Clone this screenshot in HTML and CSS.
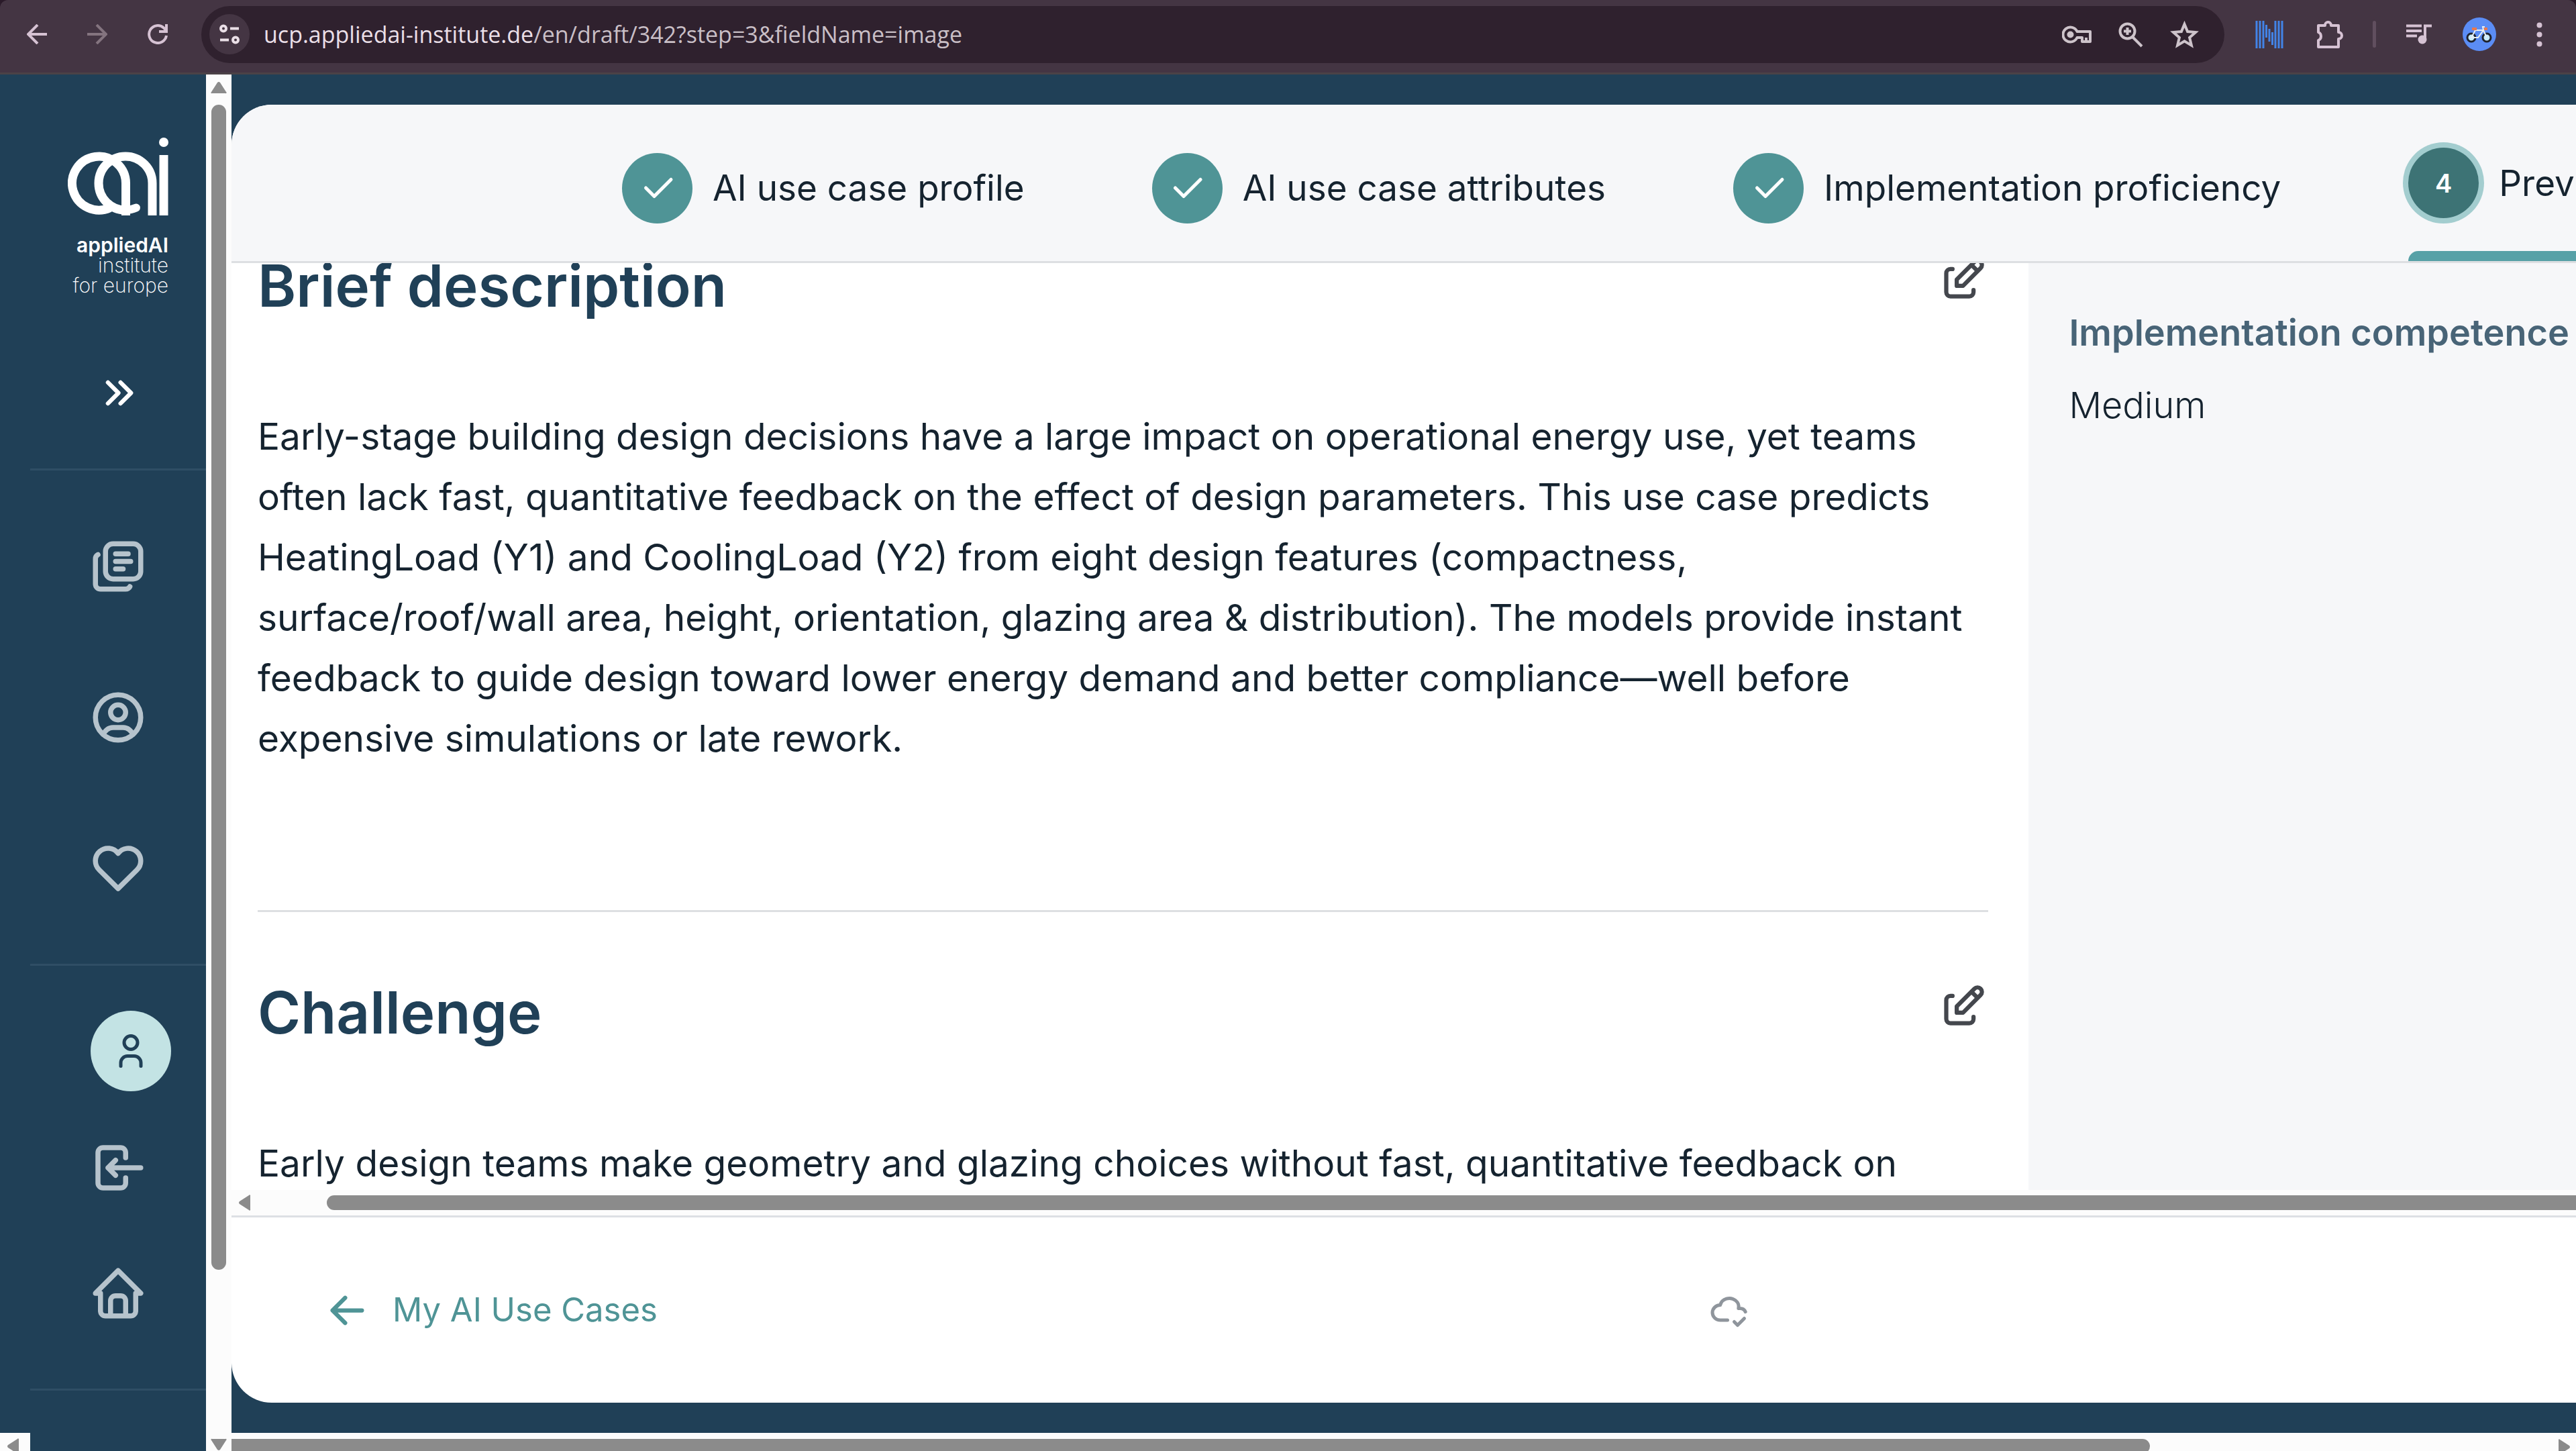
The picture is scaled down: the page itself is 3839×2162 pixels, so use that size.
FILE: index.html
```html
<!DOCTYPE html>
<html lang="en">
<head>
<meta charset="utf-8">
<title>AI use case draft</title>
<link rel="stylesheet" href="styles.css">
</head>
<body>
<div class="toolbar-wrap">
<header class="toolbar">
  <button class="tool tool-nav" aria-label="Back"><svg class="ic30" viewBox="0 0 30 30"><path d="M30 15H3M16 1L2 15l14 14" fill="none" stroke="currentColor" stroke-width="4"/></svg></button>
  <button class="tool tool-nav tool-off" aria-label="Forward"><svg class="ic30" viewBox="0 0 30 30"><path d="M0 15h27M14 1l14 14-14 14" fill="none" stroke="currentColor" stroke-width="4"/></svg></button>
  <button class="tool tool-nav" aria-label="Reload"><svg class="ic30" viewBox="0 0 30 30"><path d="M28 17A13 13 0 1 1 24 5.500l3 3M28 0v11H17" fill="none" stroke="currentColor" stroke-width="4"/></svg></button>
  <div class="omnibox">
    <button class="site-info" aria-label="Site information"><svg class="ic30" viewBox="0 0 30 30"><g fill="none" stroke="currentColor" stroke-width="4"><circle cx="6" cy="6.500" r="4"/><path d="M16 6.500h13M1 23.500h13"/><circle cx="24" cy="23.500" r="4"/></g></svg></button>
    <div class="url">ucp.appliedai-institute.de<span class="url-path">/en/draft/342?step=3&amp;fieldName=image</span></div>
    <button class="tool tool-grey" aria-label="Passwords"><svg class="ic45" viewBox="0 0 45 45"><g fill="none" stroke="currentColor" stroke-width="4" stroke-linejoin="round"><path d="M22.500 18A11 11 0 1 0 22.500 27H30v6h12V18z"/><path d="M36 33v-6"/></g><circle cx="12.500" cy="22.500" r="5" fill="currentColor"/></svg></button>
    <button class="tool tool-grey" aria-label="Zoom"><svg class="ic45" viewBox="0 0 45 45"><g fill="none" stroke="currentColor" stroke-width="4"><circle cx="17.500" cy="17.500" r="11"/><path d="M25 26l14 14M17.500 12v11M12 17.500h11"/></g></svg></button>
    <button class="tool tool-grey" aria-label="Bookmark"><svg class="ic45" viewBox="0 0 45 45"><path d="M22.500 7l4.600 11 12 1-9 8 2.800 11.600-10.400-6.200-10.400 6.200L14.900 27l-9-8 12-1z" fill="none" stroke="currentColor" stroke-width="4"/></svg></button>
  </div>
  <div class="extensions">
    <button class="tool tool-blue" aria-label="Extension"><svg class="ic45" viewBox="0 0 45 45"><path d="M4 2v41M9 2v41M14 2v41M18.500 8v19M23 14v19M27.500 19v19M32 2v41M37 2v41M42 2v41" stroke="currentColor" stroke-width="3"/></svg></button>
    <button class="tool" aria-label="Extensions"><svg class="ic45" viewBox="0 0 45 45"><path d="M5 9h10a4.500 4.500 0 0 1 9-1v1h11v10a4.500 4.500 0 0 1 0 10v12H5V31a6.500 6.500 0 0 0 0-12z" transform="translate(1 0)" fill="none" stroke="currentColor" stroke-width="4" stroke-linejoin="round"/></svg></button>
    <span class="divider"></span>
    <button class="tool" aria-label="Media"><svg class="ic45" viewBox="0 0 45 45"><path d="M3 9.500h23M3 17h23M3 24.500h16" stroke="currentColor" stroke-width="4"/><path d="M31 30V9.500h10" fill="none" stroke="currentColor" stroke-width="4"/><circle cx="27" cy="30" r="6.500" fill="currentColor"/></svg></button>
    <button class="tool person" aria-label="Profile"><svg class="ic50" viewBox="0 0 50 50"><circle cx="25" cy="25" r="25" fill="#5b8df5"/><g fill="none"><circle cx="13" cy="30" r="6" stroke="#20242e" stroke-width="3" fill="#c8ecff"/><circle cx="36" cy="30" r="6" stroke="#20242e" stroke-width="3" fill="#c8ecff"/><path d="M13 30l6-11h12l-8 11zM31 19l5 11M31 19l-1-5 3 0" stroke="#e8eef2" stroke-width="2"/><path d="M14 17h7M32 17h5" stroke="#e8794f" stroke-width="4"/></g></svg></button>
    <button class="tool" aria-label="Menu"><svg class="ic45" viewBox="0 0 45 45"><g fill="currentColor"><circle cx="22.500" cy="8.500" r="4"/><circle cx="22.500" cy="22.500" r="4"/><circle cx="22.500" cy="36.500" r="4"/></g></svg></button>
  </div>
</header>
</div>

<div class="app">
  <div class="gutter"><div class="gutter-scroll"><svg class="tri" viewBox="0 0 20 24"><path d="M18 2v20a1 1 0 0 1-2 1L2 14q-2-2 0-4L16 1a1 1 0 0 1 2 1z"/></svg></div></div>
  <aside class="sidebar">
    <div class="brand">
      <svg class="brand-mark" viewBox="0 0 150 116"><g fill="none" stroke="#fff" stroke-width="13"><path d="M86.500 116V68A40 40 0 1 0 63 104.500"/><path d="M126 116V68A40 40 0 1 0 86 108"/><path d="M86 108q8 0 16-3.500" stroke-width="12" stroke-linecap="round"/><path d="M143 26v90"/></g><circle cx="143" cy="7" r="7" fill="#fff"/></svg>
      <div class="brand-text"><strong>appliedAI</strong><br>institute<br>for europe</div>
    </div>
    <button class="expand" aria-label="Expand sidebar"><svg class="ic75 line" viewBox="0 0 24 24"><path d="M7 7l5 5-5 5M13 7l5 5-5 5"/></svg></button>
    <nav class="side-nav">
      <a href="#" class="side-link" aria-label="Use cases"><svg class="ic90 line" viewBox="0 0 24 24"><rect x="7" y="3" width="14" height="14" rx="3"/><path d="M11 7h5M11 10h6M11 13h3M4 7.300c-.6.3-1 1-1 1.700v10a2 2 0 0 0 2 2h10c.7 0 1.400-.4 1.700-1"/></svg></a>
      <a href="#" class="side-link" aria-label="Profile"><svg class="ic90 line" viewBox="0 0 24 24"><circle cx="12" cy="12" r="9"/><circle cx="12" cy="10" r="3"/><path d="M6.200 18.800A4 4 0 0 1 10 16h4a4 4 0 0 1 3.800 2.800"/></svg></a>
      <a href="#" class="side-link" aria-label="Favourites"><svg class="ic90 line" viewBox="0 0 24 24"><path d="M19.500 12.572L12 20l-7.500-7.428A5 5 0 1 1 12 6.006a5 5 0 1 1 7.500 6.572"/></svg></a>
    </nav>
    <div class="account">
      <button class="avatar" aria-label="Account"><svg class="ic60 line" viewBox="0 0 24 24"><circle cx="12" cy="7" r="4"/><path d="M6 21v-2a4 4 0 0 1 4-4h4a4 4 0 0 1 4 4v2"/></svg></button>
      <a href="#" class="side-link short" aria-label="Log out"><svg class="ic90 line" viewBox="0 0 24 24"><path d="M15 8V6a2 2 0 0 0-2-2H6a2 2 0 0 0-2 2v12a2 2 0 0 0 2 2h7a2 2 0 0 0 2-2v-2M21 12H8M11 9l-3 3 3 3"/></svg></a>
      <a href="#" class="side-link short" aria-label="Home"><svg class="ic90 line" viewBox="0 0 24 24"><path d="M5 12H3l9-9 9 9h-2M5 12v7a2 2 0 0 0 2 2h10a2 2 0 0 0 2-2v-7M9 21v-6a2 2 0 0 1 2-2h2a2 2 0 0 1 2 2v6"/></svg></a>
    </div>
  </aside>
  <div class="vscroll">
    <svg class="tri-v" viewBox="0 0 24 20"><path d="M2 18h20a1 1 0 0 0 1-2L14 2q-2-2-4 0L1 16a1 1 0 0 0 1 2z"/></svg>
    <div class="vthumb"></div>
    <div class="vrest"></div>
    <svg class="tri-v" viewBox="0 0 24 20"><path d="M2 2h20a1 1 0 0 1 1 2l-9 14q-2 2-4 0L1 4a1 1 0 0 1 1-2z"/></svg>
  </div>
  <div class="main">
    <div class="card">
      <ol class="steps">
        <li class="step"><span class="dot"><svg class="ic60 line" viewBox="0 0 24 24"><path d="M5 12l5 5L20 7"/></svg></span>AI use case profile</li>
        <li class="step"><span class="dot"><svg class="ic60 line" viewBox="0 0 24 24"><path d="M5 12l5 5L20 7"/></svg></span>AI use case attributes</li>
        <li class="step"><span class="dot"><svg class="ic60 line" viewBox="0 0 24 24"><path d="M5 12l5 5L20 7"/></svg></span>Implementation proficiency</li>
        <li class="step current"><span class="dot">4</span>Preview</li>
      </ol>
      <div class="board">
        <div class="article">
          <section class="section">
            <div class="section-head"><h2>Brief description</h2><button class="edit" aria-label="Edit brief description"><svg class="ic75 line" viewBox="0 0 24 24"><path d="M7 7H6a2 2 0 0 0-2 2v9a2 2 0 0 0 2 2h9a2 2 0 0 0 2-2v-1M20.385 6.585a2.100 2.100 0 0 0-2.970-2.970L9 12v3h3zM16 5l3 3"/></svg></button></div>
            <p>Early-stage building design decisions have a large impact on operational energy use, yet teams<br>often lack fast, quantitative feedback on the effect of design parameters. This use case predicts<br>HeatingLoad (Y1) and CoolingLoad (Y2) from eight design features (compactness,<br>surface/roof/wall area, height, orientation, glazing area &amp; distribution). The models provide instant<br>feedback to guide design toward lower energy demand and better compliance—well before<br>expensive simulations or late rework.</p>
          </section>
          <section class="section">
            <div class="section-head"><h2>Challenge</h2><button class="edit" aria-label="Edit challenge"><svg class="ic75 line" viewBox="0 0 24 24"><path d="M7 7H6a2 2 0 0 0-2 2v9a2 2 0 0 0 2 2h9a2 2 0 0 0 2-2v-1M20.385 6.585a2.100 2.100 0 0 0-2.970-2.970L9 12v3h3zM16 5l3 3"/></svg></button></div>
            <p>Early design teams make geometry and glazing choices without fast, quantitative feedback on</p>
          </section>
        </div>
        <dl class="facts"><dt>Implementation competence</dt><dd>Medium</dd></dl>
      </div>
      <div class="hscroll"><svg class="tri" viewBox="0 0 20 24"><path d="M18 2v20a1 1 0 0 1-2 1L2 14q-2-2 0-4L16 1a1 1 0 0 1 2 1z"/></svg><div class="hthumb"></div></div>
      <footer class="foot">
        <a href="#" class="back"><svg class="ic75 line" viewBox="0 0 24 24"><path d="M5 12h14M5 12l6 6M5 12l6-6"/></svg>My AI Use Cases</a>
        <svg class="ic60 line saved" viewBox="0 0 24 24"><path d="M11 18.004H6.657C4.085 18 2 15.993 2 13.517c0-2.475 2.085-4.482 4.657-4.482.393-1.762 1.794-3.200 3.675-3.773 1.880-.572 3.956-.193 5.444 1 1.488 1.190 2.162 3.007 1.770 4.769h.990c1.388 0 2.585.820 3.138 2.007M15 19l2 2 4-4"/></svg>
      </footer>
    </div>
    <div class="page-scroll"><div class="page-thumb"></div><svg class="tri" viewBox="0 0 20 24"><path d="M2 2v20a1 1 0 0 0 2 1l14-9q2-2 0-4L4 1a1 1 0 0 0-2 1z"/></svg></div>
  </div>
</div>
</body>
</html>
```

FILE: styles.css
```css
* { box-sizing: border-box; }

body {
  margin: 0;
  height: 100vh;
  display: flex;
  flex-direction: column;
  overflow: hidden;
  background: #204057;
  color: #15232f;
  font-family: Inter, "Open Sans", sans-serif;
}

button {
  display: flex;
  align-items: center;
  justify-content: center;
  padding: 0;
  border: 0;
  background: none;
  color: inherit;
  font: inherit;
}

a { color: inherit; text-decoration: none; }

svg { display: block; flex: none; }

.line {
  fill: none;
  stroke: currentColor;
  stroke-width: 2;
  stroke-linecap: round;
  stroke-linejoin: round;
}

.ic30 { width: 30px; height: 30px; }
.ic45 { width: 45px; height: 45px; }
.ic50 { width: 50px; height: 50px; }
.ic60 { width: 60px; height: 60px; }
.ic75 { width: 75px; height: 75px; }
.ic90 { width: 90px; height: 90px; }

/* Browser toolbar */
.toolbar-wrap { flex: none; background: #2a1a29; }

.toolbar {
  display: flex;
  align-items: center;
  height: 111px;
  padding: 0 32px 6px 10px;
  border-bottom: 3px solid #4b4247;
  border-radius: 12px 12px 0 0;
  background: #443543;
  color: #d6c2d3;
}

.tool-nav { width: 90px; height: 90px; }
.tool-off { color: #84747f; }
.tool-grey { color: #cdc3ca; }
.tool-blue { color: #4284e8; }

.omnibox {
  flex: 1;
  display: flex;
  align-items: center;
  gap: 35px;
  height: 85px;
  margin-left: 20px;
  padding: 0 37px 0 12px;
  border-radius: 43px;
  background: #2f212e;
}

.site-info {
  width: 60px;
  height: 60px;
  border-radius: 50%;
  background: #443543;
  color: #eadfe7;
}

.url {
  flex: 1;
  margin-left: -14px;
  color: #eadfe7;
  font-family: "Open Sans", "Noto Sans", sans-serif;
  font-size: 34px;
  line-height: 48px;
  white-space: nowrap;
}

.url-path { color: #c9bfc6; }

.extensions { display: flex; align-items: center; gap: 45px; margin-left: 44px; }
.divider { width: 5px; height: 40px; margin: 0 -3px; border-radius: 3px; background: #614f5f; }
.person { margin: 0 -3px; }

/* Shell */
.app { flex: 1; display: flex; min-height: 0; }
.gutter { flex: none; width: 45px; display: flex; flex-direction: column; justify-content: flex-end; }
.gutter-scroll { height: 27px; padding: 8px 0 0 10px; background: #fcfcfc; overflow: hidden; }
.tri { width: 20px; height: 24px; fill: #8b8b8b; }
.tri-v { width: 24px; height: 20px; fill: #8b8b8b; }

.sidebar { flex: none; width: 262px; color: #b6c3cc; overflow: hidden; }

.brand { padding: 94px 56px 0 0; color: #fff; }
.brand-mark { width: 150px; height: 116px; margin-left: auto; }

.brand-text {
  margin-top: 29px;
  font-size: 30px;
  font-weight: 200;
  line-height: 30px;
  text-align: right;
  white-space: nowrap;
}

.brand-text strong { font-weight: 600; }

.expand { width: 100%; height: 75px; margin: 108px 0 75px; color: #fff; }

.side-nav {
  padding: 30px 0;
  border-top: 3px solid #2f4e65;
  border-bottom: 3px solid #2f4e65;
}

.side-link { display: flex; align-items: center; justify-content: center; height: 225px; }
.side-link.short { height: 187px; }
.account { padding: 67px 0 49px; border-bottom: 3px solid #2f4e65; }

.avatar {
  width: 120px;
  height: 120px;
  margin: 0 0 20px 90px;
  border-radius: 50%;
  background: #c3e3e4;
  color: #204057;
}

.vscroll {
  flex: none;
  width: 38px;
  display: flex;
  flex-direction: column;
  align-items: center;
  padding-top: 10px;
  background: #fcfcfc;
}

.vthumb { width: 22px; flex: 1737; margin-top: 15px; border-radius: 11px; background: #8b8b8b; }
.vrest { flex: 250; }

/* Card */
.main { flex: 1; min-width: 0; display: flex; flex-direction: column; overflow: hidden; }

.card {
  flex: 1;
  width: 4464px;
  min-height: 0;
  display: flex;
  flex-direction: column;
  margin: 45px 0;
  border-radius: 60px;
  background: #fff;
  overflow: hidden;
}

.steps {
  flex: none;
  display: flex;
  gap: 190px;
  height: 236px;
  margin: 0;
  padding: 0 0 0 582px;
  border-bottom: 3px solid #dddfe2;
  background: #f6f7f9;
  list-style: none;
}

.step {
  position: relative;
  display: flex;
  align-items: center;
  gap: 30px;
  padding-top: 15px;
  font-size: 53px;
  line-height: 72px;
  white-space: nowrap;
}

.dot {
  width: 105px;
  height: 105px;
  display: flex;
  align-items: center;
  justify-content: center;
  border-radius: 50%;
  background: #4f9496;
  color: #fff;
}

.current { padding-bottom: 15px; }

/* Active tab marker along the bottom of the step */
.current::after {
  content: "";
  position: absolute;
  left: 0;
  right: 0;
  bottom: 0;
  height: 15px;
  border-radius: 15px 15px 0 0;
  background: #57a1a7;
}

.current .dot {
  background: #3d7375;
  box-shadow: 0 0 0 8px #a3cdcf;
  font-size: 38px;
  font-weight: 600;
}

.board { flex: 1; min-height: 0; display: grid; grid-template-columns: 3fr 2fr; overflow: hidden; }
.article { margin-top: -19px; padding: 0 60px 0 39px; }
.section + .section { margin-top: 211px; padding-top: 97px; border-top: 3px solid #dddfe2; }

.section-head { display: flex; align-items: flex-start; justify-content: space-between; margin-bottom: 127px; }
.edit { padding-top: 6px; color: #44474d; }

h2 { margin: 0; color: #204057; font-size: 87px; font-weight: 600; line-height: 105px; }
p { margin: 0; font-size: 55px; line-height: 90px; white-space: nowrap; }

.facts { margin: 0; padding: 65px 60px; background: #f6f7f9; font-size: 54px; line-height: 78px; }
.facts dt { color: #486477; font-weight: 600; white-space: nowrap; }
.facts dd { margin: 30px 0 0; font-weight: 300; }

.hscroll { flex: none; display: flex; align-items: center; gap: 112px; height: 38px; padding-left: 10px; background: #fcfcfc; }
.hthumb { flex: 1; height: 22px; border-radius: 11px; background: #8b8b8b; }

.foot {
  flex: none;
  display: grid;
  grid-template-columns: 1fr auto 1fr;
  align-items: center;
  height: 279px;
  padding: 0 135px;
  border-top: 3px solid #dde0e4;
}

.back { display: flex; align-items: center; gap: 30px; color: #4f9496; font-size: 49px; line-height: 72px; }
.saved { color: #8f959c; }

.page-scroll { flex: none; display: flex; justify-content: space-between; height: 27px; padding: 9px 8px 0 0; background: #fcfcfc; overflow: hidden; }
.page-thumb { flex: none; width: 82%; height: 22px; border-radius: 0 11px 11px 0; background: #8b8b8b; }
```
